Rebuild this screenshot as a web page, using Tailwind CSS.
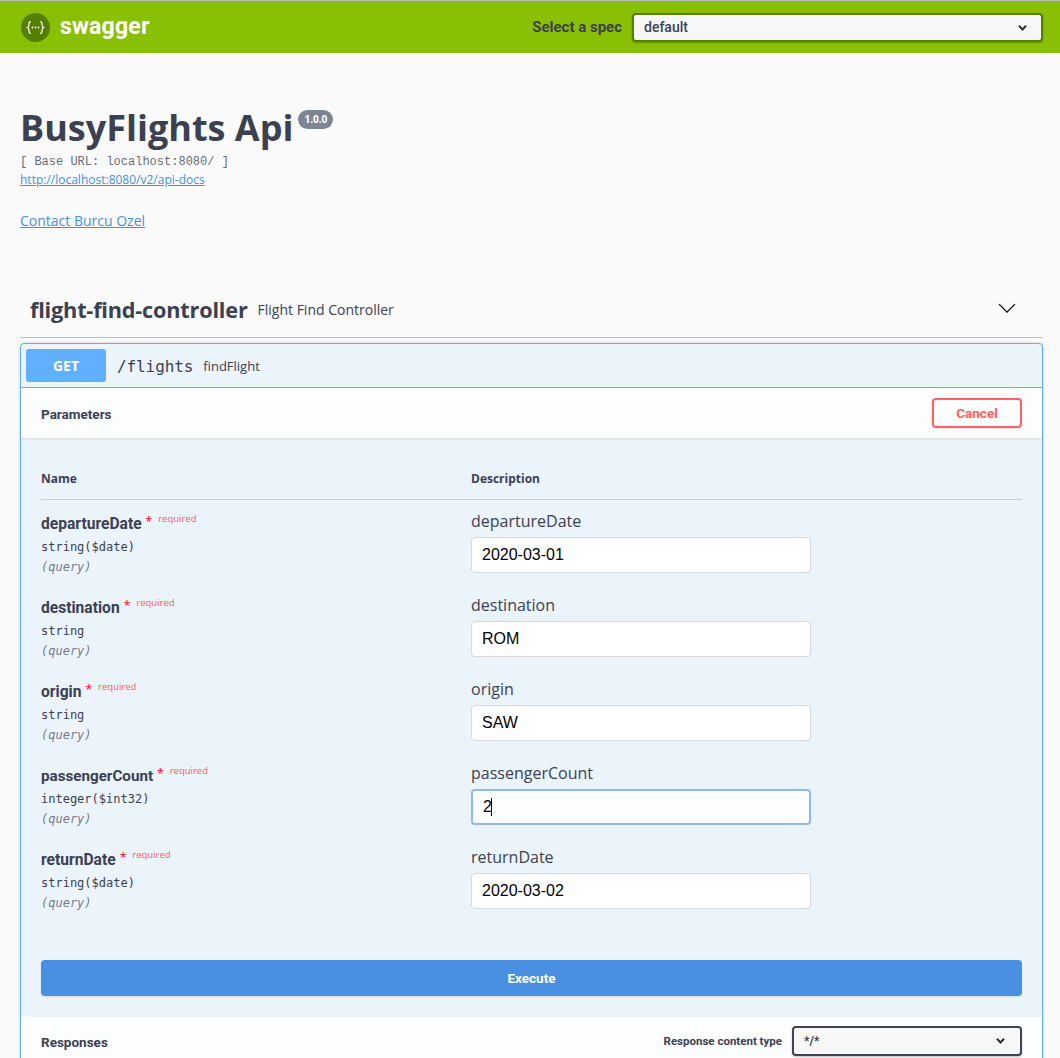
<!DOCTYPE html>
<html lang="en">
<head>
    <meta charset="UTF-8">
    <meta name="viewport" content="width=device-width, initial-scale=1.0">
    <title>BusyFlights Api</title>
    <script src="https://cdn.jsdelivr.net/npm/@tailwindcss/browser@4"></script>
</head>
<body class="bg-[#fafafa] font-['Open_Sans',sans-serif] text-[#3b4151] overflow-hidden">
    <div class="h-[1058px] overflow-hidden">
        <!-- topbar -->
        <nav class="h-[53px] bg-[#89bf04] border-t border-[#bdbdbd] flex items-center pl-[21px] pr-[17px]">
            <svg class="w-[29px] h-[29px]" viewBox="0 0 29 29" fill="none">
                <circle cx="14.5" cy="14.5" r="14.5" fill="#547f00"/>
                <path d="M10 8.5c-2 0-2 1-2 2.5s0 3-1.5 3.5c1.500.5 1.500 2 1.500 3.500s0 2.500 2 2.500M19 8.500c2 0 2 1 2 2.500s0 3 1.500 3.500c-1.500.5-1.500 2-1.500 3.500s0 2.500-2 2.500" stroke="#fff" stroke-width="1.200"/>
                <circle cx="11.500" cy="14.500" r="0.900" fill="#fff"/>
                <circle cx="14.500" cy="14.500" r="0.900" fill="#fff"/>
                <circle cx="17.500" cy="14.500" r="0.900" fill="#fff"/>
            </svg>
            <span class="ml-[10px] text-white font-['Roboto',sans-serif] font-bold text-[23px] leading-none tracking-[0.2px] -mt-[1px]">swagger</span>
            <div class="ml-auto flex items-center gap-[10px]">
                <span class="font-['Roboto',sans-serif] font-bold text-[15px] text-[#3b4151]">Select a spec</span>
                <div class="relative w-[411px] h-[29px]">
                    <select class="appearance-none w-full h-full rounded-[4px] border-2 border-[#547f00] bg-[#f7f7f7] pl-[10px] font-['Roboto',sans-serif] font-medium text-[14px] text-[#3b4151] shadow-[0_1px_2px_rgba(0,0,0,0.25)]">
                        <option>default</option>
                    </select>
                    <svg class="absolute right-[12px] top-[6px] w-[17px] h-[17px]" viewBox="0 0 20 20" fill="#303030">
                        <path d="M13.250 7.200 10 10.500 6.750 7.200 5 8.900l5 5.100 5-5.100z"/>
                    </svg>
                </div>
            </div>
        </nav>

        <!-- info -->
        <section class="pl-5 pt-[50px]">
            <div class="flex items-start">
                <h1 class="text-[36px] leading-[50px] font-bold text-[#3b4151]">BusyFlights Api</h1>
                <span class="ml-[5px] mt-[7px] h-[19px] px-[6px] rounded-full bg-[#7d8492] text-white text-[10px] font-bold leading-[19px]">1.0.0</span>
            </div>
            <p class="font-['Liberation_Mono',monospace] text-[12px] leading-[16px] mt-[1px] text-[#3b4151]/80">[ Base URL: localhost:8080/ ]</p>
            <a href="#" class="block mt-[2px] text-[12px] leading-[16px] text-[#4990e2] underline">http://localhost:8080/v2/api-docs</a>
            <a href="#" class="block mt-[23px] text-[14px] leading-[20px] text-[#4990e2] underline">Contact Burcu Ozel</a>
        </section>

        <!-- controller -->
        <section class="mx-5 w-[1023px] mt-[50px]">
            <header class="h-[57px] flex items-center pl-[10px] pr-[26px] border-b border-[#3b4151]/30">
                <h2 class="mt-[2px] font-bold text-[21.700px] tracking-[-0.2px] text-[#3b4151]">flight-find-controller</h2>
                <span class="ml-[10px] text-[14px] text-[#3b4151]">Flight Find Controller</span>
                <svg class="ml-auto w-[20px] h-[20px]" viewBox="0 0 20 20" fill="#000">
                    <path d="M17.500 4.700 10 12.200 2.500 4.700l-.9.900L10 14l8.400-8.400z"/>
                </svg>
            </header>

            <div class="mt-[5px] border border-[#61affe] rounded-[4px] bg-[#ebf3fb] shadow-[0_0_3px_rgba(0,0,0,0.19)]">
                <div class="h-[44px] flex items-center pl-[5px] border-b border-[#61affe]">
                    <span class="w-[80px] h-[33px] rounded-[3px] bg-[#61affe] text-white text-center text-[14px] font-bold leading-[33px]">GET</span>
                    <span class="ml-[11px] mt-[2px] font-['DejaVu_Sans_Mono',monospace] text-[16px] tracking-[-0.1px] text-[#3b4151]">/flights</span>
                    <span class="ml-[10px] mt-[2px] text-[13px] text-[#3b4151]">findFlight</span>
                </div>

                <div class="h-[50px] bg-white/80 flex items-center justify-between pl-5 pr-5 shadow-[0_1px_2px_rgba(0,0,0,0.1)]">
                    <h4 class="mt-[2px] font-['Roboto',sans-serif] font-bold text-[13.500px] text-[#3b4151]">Parameters</h4>
                    <button class="w-[90px] h-[30px] rounded-[4px] border-2 border-[#ff6060] bg-transparent text-[#ff6060] font-['Roboto',sans-serif] font-bold text-[13.500px] shadow-[0_1px_2px_rgba(0,0,0,0.1)]">Cancel</button>
                </div>

                <div class="px-5 pt-[31px]">
                    <div class="flex h-[31px] border-b border-[#3b4151]/20 font-bold text-[12px] leading-[20px] text-[#3b4151]">
                        <div class="w-[430px]">Name</div>
                        <div>Description</div>
                    </div>

                    <div class="pt-[10px]" id="rows">
                        <!-- departureDate -->
                        <div class="flex h-[84px]">
                            <div class="w-[430px] pt-[3px]">
                                <div class="flex items-start h-[22px]">
                                    <span class="font-['Roboto',sans-serif] font-bold text-[15.600px] leading-[22px]">departureDate</span>
                                    <span class="ml-[4px] text-[red] text-[12px] leading-[18px]">*</span>
                                    <span class="ml-[6px] -mt-[2px] text-[#ff6060] text-[9.500px] leading-[16px]">required</span>
                                </div>
                                <div class="mt-[2px] font-['DejaVu_Sans_Mono',monospace] text-[12px] leading-[20px]">string($date)</div>
                                <div class="font-['DejaVu_Sans_Mono',monospace] italic text-[12px] leading-[20px] text-[#3b4151]/70">(query)</div>
                            </div>
                            <div>
                                <div class="text-[16px] leading-[22px] text-[#3b4151]">departureDate</div>
                                <input type="text" value="2020-03-01" class="mt-[5px] block w-[340px] h-[36px] rounded-[4px] border border-[#d9d9d9] bg-white px-[10px] font-['Liberation_Sans',sans-serif] text-[16px] text-black">
                            </div>
                        </div>
                        <!-- destination -->
                        <div class="flex h-[84px]">
                            <div class="w-[430px] pt-[3px]">
                                <div class="flex items-start h-[22px]">
                                    <span class="font-['Roboto',sans-serif] font-bold text-[15.600px] leading-[22px]">destination</span>
                                    <span class="ml-[4px] text-[red] text-[12px] leading-[18px]">*</span>
                                    <span class="ml-[6px] -mt-[2px] text-[#ff6060] text-[9.500px] leading-[16px]">required</span>
                                </div>
                                <div class="mt-[2px] font-['DejaVu_Sans_Mono',monospace] text-[12px] leading-[20px]">string</div>
                                <div class="font-['DejaVu_Sans_Mono',monospace] italic text-[12px] leading-[20px] text-[#3b4151]/70">(query)</div>
                            </div>
                            <div>
                                <div class="text-[16px] leading-[22px] text-[#3b4151]">destination</div>
                                <input type="text" value="ROM" class="mt-[5px] block w-[340px] h-[36px] rounded-[4px] border border-[#d9d9d9] bg-white px-[10px] font-['Liberation_Sans',sans-serif] text-[16px] text-black">
                            </div>
                        </div>
                        <!-- origin -->
                        <div class="flex h-[84px]">
                            <div class="w-[430px] pt-[3px]">
                                <div class="flex items-start h-[22px]">
                                    <span class="font-['Roboto',sans-serif] font-bold text-[15.600px] leading-[22px]">origin</span>
                                    <span class="ml-[4px] text-[red] text-[12px] leading-[18px]">*</span>
                                    <span class="ml-[6px] -mt-[2px] text-[#ff6060] text-[9.500px] leading-[16px]">required</span>
                                </div>
                                <div class="mt-[2px] font-['DejaVu_Sans_Mono',monospace] text-[12px] leading-[20px]">string</div>
                                <div class="font-['DejaVu_Sans_Mono',monospace] italic text-[12px] leading-[20px] text-[#3b4151]/70">(query)</div>
                            </div>
                            <div>
                                <div class="text-[16px] leading-[22px] text-[#3b4151]">origin</div>
                                <input type="text" value="SAW" class="mt-[5px] block w-[340px] h-[36px] rounded-[4px] border border-[#d9d9d9] bg-white px-[10px] font-['Liberation_Sans',sans-serif] text-[16px] text-black">
                            </div>
                        </div>
                        <!-- passengerCount -->
                        <div class="flex h-[84px]">
                            <div class="w-[430px] pt-[3px]">
                                <div class="flex items-start h-[22px]">
                                    <span class="font-['Roboto',sans-serif] font-bold text-[15.200px] leading-[22px]">passengerCount</span>
                                    <span class="ml-[4px] text-[red] text-[12px] leading-[18px]">*</span>
                                    <span class="ml-[6px] -mt-[2px] text-[#ff6060] text-[9.500px] leading-[16px]">required</span>
                                </div>
                                <div class="mt-[2px] font-['DejaVu_Sans_Mono',monospace] text-[12px] leading-[20px]">integer($int32)</div>
                                <div class="font-['DejaVu_Sans_Mono',monospace] italic text-[12px] leading-[20px] text-[#3b4151]/70">(query)</div>
                            </div>
                            <div>
                                <div class="text-[16px] leading-[22px] text-[#3b4151]">passengerCount</div>
                                <div class="relative mt-[5px] w-[340px] h-[36px]">
                                    <input type="text" value="2" class="block w-full h-full rounded-[4px] border-2 border-[#8fb8f6] bg-white pl-[10px] pr-[10px] font-['Liberation_Sans',sans-serif] text-[16px] text-black">
                                    <span class="absolute left-[20px] top-[9px] w-px h-[18px] bg-black"></span>
                                </div>
                            </div>
                        </div>
                        <!-- returnDate -->
                        <div class="flex h-[84px]">
                            <div class="w-[430px] pt-[3px]">
                                <div class="flex items-start h-[22px]">
                                    <span class="font-['Roboto',sans-serif] font-bold text-[15.600px] leading-[22px]">returnDate</span>
                                    <span class="ml-[4px] text-[red] text-[12px] leading-[18px]">*</span>
                                    <span class="ml-[6px] -mt-[2px] text-[#ff6060] text-[9.500px] leading-[16px]">required</span>
                                </div>
                                <div class="mt-[2px] font-['DejaVu_Sans_Mono',monospace] text-[12px] leading-[20px]">string($date)</div>
                                <div class="font-['DejaVu_Sans_Mono',monospace] italic text-[12px] leading-[20px] text-[#3b4151]/70">(query)</div>
                            </div>
                            <div>
                                <div class="text-[16px] leading-[22px] text-[#3b4151]">returnDate</div>
                                <input type="text" value="2020-03-02" class="mt-[5px] block w-[340px] h-[36px] rounded-[4px] border border-[#d9d9d9] bg-white px-[10px] font-['Liberation_Sans',sans-serif] text-[16px] text-black">
                            </div>
                        </div>
                    </div>

                    <button class="mt-[30px] block w-full h-[36px] rounded-[4px] bg-[#4990e2] text-white font-['Roboto',sans-serif] font-bold text-[13.500px] shadow-[0_1px_2px_rgba(0,0,0,0.1)]">Execute</button>
                </div>

                <div class="mt-[21px] h-[60px] bg-white/80 flex items-start justify-between pl-5 pr-5 pt-[9px]">
                    <h4 class="mt-[1px] font-['Roboto',sans-serif] font-bold text-[13.500px] leading-[30px] text-[#3b4151]">Responses</h4>
                    <div class="flex items-center">
                        <span class="font-['Roboto',sans-serif] font-bold text-[11.500px] leading-[30px] text-[#3b4151]">Response content type</span>
                        <div class="relative ml-[10px] w-[230px] h-[30px]">
                            <select class="appearance-none w-full h-full rounded-[4px] border-2 border-[#41444e] bg-[#f7f7f7] pl-[10px] font-['Roboto',sans-serif] font-bold text-[12px] text-[#3b4151] shadow-[0_1px_2px_rgba(0,0,0,0.25)]">
                                <option>*/*</option>
                            </select>
                            <svg class="absolute right-[13px] top-[6px] w-[17px] h-[17px]" viewBox="0 0 20 20" fill="#303030">
                                <path d="M13.250 7.200 10 10.500 6.750 7.200 5 8.900l5 5.100 5-5.100z"/>
                            </svg>
                        </div>
                    </div>
                </div>
            </div>
        </section>
    </div>
</body>
</html>
